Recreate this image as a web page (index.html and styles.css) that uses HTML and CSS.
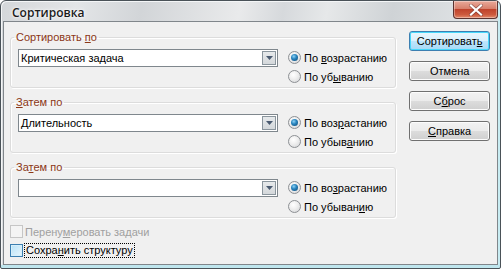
FILE: index.html
```html
<!DOCTYPE html>
<html lang="ru">
<head>
<meta charset="utf-8">
<title>Сортировка</title>
<link rel="stylesheet" href="styles.css">
</head>
<body>
<div class="window">
  <div class="titlebar">
    <span class="title">Сортировка</span>
    <div class="close">
      <svg width="14" height="12" viewBox="0 0 14 12"><path d="M2 1.5 L12 10.5 M12 1.5 L2 10.5" stroke="#5a2a2a" stroke-width="3.6" stroke-linecap="square" opacity="0.55"/><path d="M2 1.5 L12 10.5 M12 1.5 L2 10.5" stroke="#ffffff" stroke-width="2.2" stroke-linecap="square"/></svg>
    </div>
  </div>
  <div class="client">
    <div class="main">
      <fieldset class="group">
        <legend>Сортировать <u>п</u>о</legend>
        <div class="row">
          <div class="combo"><span class="combo-text">Критическая задача</span><span class="combo-btn"><svg width="7" height="4" viewBox="0 0 7 4"><path d="M0 0 H7 L3.5 4 Z" fill="#4a5a70"/></svg></span></div>
          <div class="radios">
            <label class="radio"><span class="rb checked"></span><span>По <u>в</u>озрастанию</span></label>
            <label class="radio"><span class="rb"></span><span>По уб<u>ы</u>ванию</span></label>
          </div>
        </div>
      </fieldset>
      <fieldset class="group">
        <legend><u>З</u>атем по</legend>
        <div class="row">
          <div class="combo"><span class="combo-text">Длительность</span><span class="combo-btn"><svg width="7" height="4" viewBox="0 0 7 4"><path d="M0 0 H7 L3.5 4 Z" fill="#4a5a70"/></svg></span></div>
          <div class="radios">
            <label class="radio"><span class="rb checked"></span><span>По воз<u>р</u>астанию</span></label>
            <label class="radio"><span class="rb"></span><span>По убыв<u>а</u>нию</span></label>
          </div>
        </div>
      </fieldset>
      <fieldset class="group">
        <legend>За<u>т</u>ем по</legend>
        <div class="row">
          <div class="combo"><span class="combo-text"></span><span class="combo-btn"><svg width="7" height="4" viewBox="0 0 7 4"><path d="M0 0 H7 L3.5 4 Z" fill="#4a5a70"/></svg></span></div>
          <div class="radios">
            <label class="radio"><span class="rb checked"></span><span>По во<u>з</u>растанию</span></label>
            <label class="radio"><span class="rb"></span><span>По убыван<u>и</u>ю</span></label>
          </div>
        </div>
      </fieldset>
      <div class="checks">
        <label class="check disabled"><span class="cb"></span><span>Перену<u>м</u>еровать задачи</span></label>
        <label class="check focused"><span class="cb"></span><span class="focus-text">Сохра<u>н</u>ить структуру</span></label>
      </div>
    </div>
    <div class="buttons">
      <button class="btn default">Сортироват<u>ь</u></button>
      <button class="btn">Отмена</button>
      <button class="btn">С<u>б</u>рос</button>
      <button class="btn"><u>С</u>правка</button>
    </div>
  </div>
</div>
</body>
</html>
```

FILE: styles.css
```css
html, body {
  margin: 0;
  padding: 0;
  background: #ffffff;
}

body {
  font-family: "Liberation Sans", Arial, sans-serif;
  font-size: 11px;
  color: #000;
}

.window {
  width: 499px;
  height: 267px;
  border: 1px solid #4a5258;
  border-radius: 6px 6px 2px 2px;
  background: linear-gradient(100deg, #d4d7da 0%, #e3e5e7 14%, #d2d5d8 26%, #e9eaeb 44%, #d6d9dc 52%, #e6e8e9 60%, #cfd3d6 72%, #dfe2e4 86%, #d0d4d7 100%);
  display: flex;
  flex-direction: column;
  box-shadow: inset 0 -3px 0 #bfe6ee, inset -2px 0 0 #c8ecf2, inset 1px 1px 0 #f4f6f7;
}

.titlebar {
  height: 20px;
  display: flex;
  align-items: flex-start;
  justify-content: space-between;
}

.title {
  font-family: "Open Sans", "DejaVu Sans", sans-serif;
  font-size: 12px;
  font-weight: 600;
  color: #1c1c1c;
  margin: 4px 0 0 11px;
  line-height: 16px;
  text-shadow: 0 0 4px #ffffff, 0 0 2px #ffffff;
}

.close {
  width: 43px;
  height: 17px;
  margin-right: 2px;
  border: 1px solid #5b3330;
  border-top: none;
  border-radius: 0 0 4px 4px;
  background: linear-gradient(#e9a99a 0%, #d7806c 45%, #c0432c 50%, #cd5a3e 80%, #e48a6c 100%);
  box-shadow: inset 0 0 0 1px rgba(255,255,255,0.35);
  display: flex;
  align-items: center;
  justify-content: center;
}

.client {
  flex: 1;
  margin: 0 2px 3px 2px;
  border: 1px solid #80868b;
  background: #f0f0f0;
  display: flex;
  padding: 9px 7px 0 6px;
  gap: 13px;
}

.main {
  width: 388px;
  display: flex;
  flex-direction: column;
  gap: 8px;
}

.group {
  margin: 0;
  padding: 4px 8px 1px 7px;
  border: 1px solid #dcdcdc;
  border-radius: 3px;
  box-shadow: 1px 1px 0 #ffffff, inset 1px 1px 0 #ffffff;
  min-width: 0;
}

.group legend {
  padding: 0 2px;
  margin-left: -4px;
  line-height: 13px;
  color: #8b3716;
}

.row {
  display: flex;
  align-items: flex-start;
  gap: 10px;
}

.combo {
  width: 260px;
  height: 18px;
  box-sizing: border-box;
  margin-top: 1px;
  border: 1px solid #7f878d;
  background: #ffffff;
  display: flex;
  align-items: center;
  justify-content: space-between;
}

.combo-text {
  padding-left: 2px;
  line-height: 14px;
}

.combo-btn {
  width: 14px;
  height: 14px;
  box-sizing: border-box;
  margin-right: 1px;
  border: 1px solid #8a959d;
  background: linear-gradient(#e6e9eb, #d4d8db);
  display: flex;
  align-items: center;
  justify-content: center;
}

.radios {
  display: flex;
  flex-direction: column;
}

.radio {
  height: 19px;
  display: flex;
  align-items: center;
  gap: 3px;
  white-space: nowrap;
}

.rb {
  width: 13px;
  height: 13px;
  flex: none;
  box-sizing: border-box;
  border-radius: 50%;
  border: 1px solid #8d9094;
  background: radial-gradient(circle at 40% 35%, #ffffff 0%, #f0f0f0 40%, #d2d4d6 100%);
  display: inline-block;
  position: relative;
}

.rb.checked::after {
  content: "";
  position: absolute;
  left: 2px;
  top: 2px;
  width: 7px;
  height: 7px;
  border-radius: 50%;
  background: radial-gradient(circle at 40% 35%, #8fd3f5 0%, #2a86c0 40%, #0b4470 100%);
}

.checks {
  display: flex;
  flex-direction: column;
  margin-top: -4px;
}

.check {
  height: 19px;
  display: flex;
  align-items: center;
  gap: 2px;
  white-space: nowrap;
}

.cb {
  width: 13px;
  height: 13px;
  flex: none;
  box-sizing: border-box;
  border: 1px solid #8e8f8f;
  background: linear-gradient(135deg, #e6e6e6, #ffffff);
  display: inline-block;
}

.check.disabled {
  color: #a0a0a0;
}

.check.disabled .cb {
  border-color: #c6c6c6;
  background: #f4f4f4;
}

.check.focused .cb {
  border-color: #3c7fb1;
  background: linear-gradient(135deg, #b9e2f7, #e7f6fd);
  box-shadow: inset 0 0 0 1px #d6effb;
}

.focus-text {
  outline: 1px dotted #000;
  padding: 0 1px;
  line-height: 13px;
}

.buttons {
  display: flex;
  flex-direction: column;
  gap: 10px;
}

.btn {
  width: 81px;
  height: 20px;
  padding: 0;
  font-family: "Liberation Sans", Arial, sans-serif;
  font-size: 11px;
  font-weight: normal;
  color: #000;
  border: 1px solid #707070;
  border-radius: 3px;
  background: linear-gradient(#f2f2f2 0%, #ebebeb 50%, #dddddd 50%, #cfcfcf 100%);
  box-shadow: inset 0 0 0 1px #fcfcfc;
}

.btn.default {
  border-color: #3c7fb1;
  background: linear-gradient(#eaf6fd 0%, #d9f0fc 50%, #bee6fd 50%, #a7d9f5 100%);
  box-shadow: inset 0 0 0 1px #48d8fb;
}
```
